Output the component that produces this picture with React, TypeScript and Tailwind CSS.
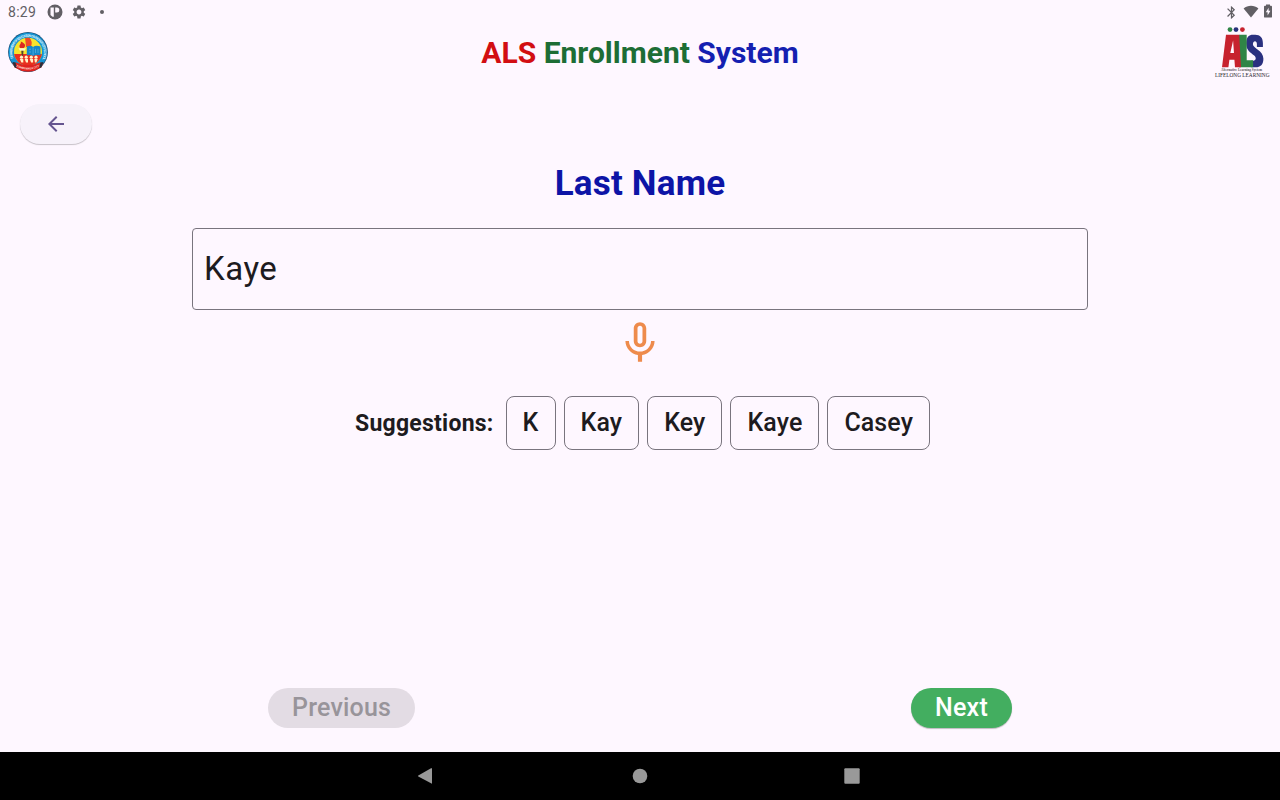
import React, { useState } from "react";
import { MdArrowBack, MdBluetooth, MdMicNone, MdSettings } from "react-icons/md";

const suggestions = ["K", "Kay", "Key", "Kaye", "Casey"];

function StatusBar() {
  return (
    <div className="flex h-6 shrink-0 items-center justify-between pl-2 pr-[7px] text-[#625f65]">
      <div className="flex items-center">
        <span className="w-[39px] text-[14px] leading-6 tracking-[0.3px]">8:29</span>
        <svg className="h-4 w-4" viewBox="0 0 16 16">
          <circle cx="8" cy="8" r="7.5" fill="currentColor" />
          <path d="M3.500 3.500h3.300v9.300H5.500l-2-1.900z" fill="#fef7ff" />
          <path d="M8.200 3.500h1.600a2.500 2.500 0 0 1 0 5H8.200z" fill="#fef7ff" />
        </svg>
        <MdSettings className="ml-2 h-4 w-4" />
        <span className="ml-[13px] h-1 w-1 rounded-full bg-[#625f65]" />
      </div>
      <div className="flex items-center">
        <MdBluetooth className="h-[15px] w-[15px]" />
        <svg className="ml-[4px] mb-px h-[13px] w-4" viewBox="0 0 16 13">
          <path d="M8 12.6 .6 3.4C4.700-.3 11.300-.3 15.400 3.400z" fill="currentColor" />
        </svg>
        <svg className="ml-[4px] mb-[2px] h-[14px] w-[10px]" viewBox="0 0 10 14">
          <path d="M3 .5h4v1.3h1.1q.9 0 .9.9v10q0 .9-.9.9H1.9q-.9 0-.9-.9v-10q0-.9.9-.9H3z" fill="currentColor" />
          <path d="M5.600 3.700 2.800 8.300h1.800v3.200l2.800-4.800H5.600z" fill="#fef7ff" />
        </svg>
      </div>
    </div>
  );
}

function DivisionSeal() {
  return (
    <svg className="h-10 w-10 overflow-visible" viewBox="0 0 40 40">
      <defs>
        <path id="seal-top" d="M5.500 27A15.800 15.800 0 1 1 34.500 27" />
        <path id="seal-bottom" d="M9 34.800Q20 40.200 31 34.800" />
        <clipPath id="seal-core">
          <circle cx="20" cy="19.800" r="14" />
        </clipPath>
      </defs>
      <circle cx="20" cy="20" r="19.900" fill="#1b4f76" />
      <circle cx="20" cy="20" r="19.200" fill="#1593d2" />
      <g clipPath="url(#seal-core)">
        <path d="M6 5h28v30H6z" fill="#f7e32c" />
        <path d="M17 5h4q4 4 2 10h-5z" fill="#ef4a26" />
        <path d="M6 22h28v13H6z" fill="#e9301f" />
        <path d="M18.800 14.500q4-1.500 6.300.5 2.500-2 7.400-.5v8.800q-5-1-7.400.7-2.300-1.700-6.300-.7z" fill="#1687c7" />
        <path d="M25.100 15.500v8M21 17.200h2M21 20h2M27.500 16.800v4.200M30 16.800v4.200" stroke="#69bde6" strokeWidth=".6" />
        <path d="M10.500 16.300h7.500l-1.500 2.500H12z" fill="#fbf6cc" />
        <path d="M13.300 18.800h2.200l-.4 5.200h-1.400z" fill="#55442c" />
        <path d="M12 16c-1.800-3.500 1.500-3.500.8-6.500 5 2.300 5.200 4.500 3 6.500z" fill="#dc2820" />
        <g fill="#fff3c8">
          <circle cx="13.500" cy="25.200" r="1.600" />
          <circle cx="18.200" cy="25.200" r="1.600" />
          <circle cx="23.300" cy="25.200" r="1.600" />
          <circle cx="28" cy="25.200" r="1.600" />
          <path d="M11.800 27h3.500v3.600h-2zM16.700 27h3.300v3.600h-2zM21.700 27h3.400v3.600h-2zM26.300 27h3.400l-1.300 3.600h-1.500z" />
        </g>
      </g>
      <path d="M4.500 31 8 30.500q12 5 24 0l3.500.5-2.200 4.500-1.500.7Q20 43.500 8.200 36.200l-1.500-.7z" fill="#df231f" />
      <path d="m4.500 30 3 .4 1.200 5.500-2-.4zM35.500 30l-3 .4-1.200 5.500 2-.4z" fill="#23333e" />
      <text fontSize="3.500" fontWeight="700" fill="#d4effb">
        <textPath href="#seal-top" startOffset="1" textLength="63">DEPARTMENT OF EDUCATION • DIVISION OF CITY SCHOOLS</textPath>
      </text>
      <text fontSize="2.800" fontWeight="700" fill="#ffd6cc">
        <textPath href="#seal-bottom" startOffset="50%" textAnchor="middle">ZAMBOANGA CITY</textPath>
      </text>
    </svg>
  );
}

function AlsLogo() {
  return (
    <svg className="h-[52px] w-[56px] overflow-visible" viewBox="0 0 56 52">
      <circle cx="16" cy="3.600" r="2.400" fill="#2f8546" />
      <circle cx="22" cy="3.600" r="2.400" fill="#27307a" />
      <circle cx="28.400" cy="3.600" r="2.400" fill="#c7222e" />
      <path d="M37.500 8.700h3.700c5 0 7.700 3 7.700 8.300v4h-6v-3c0-3.800-4-3.500-4 .2 0 4 10.500 6.200 10.500 14.500 0 5.600-2.800 8.600-7.800 8.600H37v-6.600c5 1 6-2.800 3.200-5.200-3.700-3.200-8-5.200-8-11.800 0-5.700 1.700-8 5.300-9z" fill="#2b3180" />
      <path d="M25 8.700h7.700v25.500h6.400v7.100H25z" fill="#2f8546" />
      <path d="M12 8.700h13.200l1.800 32.600h-6l-.6-7.600h-5l-1 7.600H8zM16.300 27h3.700l-.9-12.500z" fill="#c7222e" fillRule="evenodd" />
      <text x="7" y="45.300" fontFamily="Liberation Serif, serif" fontSize="4" fontWeight="700" fill="#5b5561" textLength="41" lengthAdjust="spacingAndGlyphs">Alternative Learning System</text>
      <text x="1" y="50.600" fontFamily="Liberation Serif, serif" fontSize="6" fill="#29262d" textLength="54.500" lengthAdjust="spacingAndGlyphs">LIFELONG LEARNING</text>
    </svg>
  );
}

function NavigationBar() {
  return (
    <nav className="flex h-12 shrink-0 items-center justify-center gap-[188px] bg-black text-[#999999]">
      <svg className="h-6 w-6" viewBox="0 0 24 24">
        <path d="M16 4.200v15.600L2.300 12.600q-.8-.6 0-1.200L15 4.300z" fill="currentColor" />
      </svg>
      <svg className="h-6 w-6" viewBox="0 0 24 24">
        <circle cx="12" cy="12" r="7.300" fill="currentColor" />
      </svg>
      <svg className="h-6 w-6" viewBox="0 0 24 24">
        <rect x="4.300" y="4.300" width="15.400" height="15.400" rx="1" fill="currentColor" />
      </svg>
    </nav>
  );
}

export default function App() {
  const [name, setName] = useState("Kaye");
  return (
    <div className="flex h-[800px] w-[1280px] flex-col overflow-hidden bg-[#fef7ff] font-[Roboto,sans-serif] text-[#1d1b20]">
      <StatusBar />
      <header className="flex h-14 shrink-0 items-center justify-between pl-2 pr-[10px]">
        <div className="flex w-[58px]"><DivisionSeal /></div>
        <h1 className="pt-0.5 text-[30px] leading-9 font-bold text-[#d20e12]">
          ALS <span className="text-[#1d6d35]">Enrollment</span> <span className="text-[#151fb1]">System</span>
        </h1>
        <AlsLogo />
      </header>
      <main className="flex flex-1 flex-col items-center pt-6">
        <button aria-label="Back" className="ml-5 flex h-10 w-[72px] shrink-0 items-center justify-center self-start rounded-full bg-[#f7f2fa] text-[#65558f] shadow-[0_1px_1px_rgba(0,0,0,0.22)]">
          <MdArrowBack className="h-6 w-6" />
        </button>
        <h2 className="mt-[19px] text-[35px] leading-[42px] font-bold tracking-[0.2px] text-[#0d14a6]">Last Name</h2>
        <input
          aria-label="Last Name"
          className="mt-[23px] h-[82px] w-[896px] shrink-0 rounded border border-[#79747e] bg-transparent px-[11px] pb-px text-[33px] tracking-[0.5px] outline-none"
          value={name}
          onChange={(e) => setName(e.target.value)}
        />
        <button aria-label="Speak" className="mt-2 text-[#ee8b4c]">
          <MdMicNone className="h-[50px] w-[50px]" />
        </button>
        <div className="mt-7 flex items-center gap-2 pl-[5px]">
          <span className="mr-1 h-[54px] text-[23px] leading-[56px] font-bold tracking-[0.25px]">Suggestions:</span>
          {suggestions.map((s) => (
            <button key={s} onClick={() => setName(s)} className="h-[54px] rounded-lg border border-[#79747e] px-4 text-[25px] font-medium tracking-[0.1px]">
              {s}
            </button>
          ))}
        </div>
        <div className="mt-auto mb-6 flex w-[744px] items-center justify-between">
          <button disabled className="h-10 rounded-full bg-[#e3dce4] px-6 text-[25px] leading-10 font-medium tracking-[0.2px] text-[#98949a]">Previous</button>
          <button className="h-10 rounded-full bg-[#43ae60] px-6 text-[25px] leading-10 font-medium tracking-[0.25px] text-white shadow-[0_1px_1px_rgba(0,0,0,0.25)]">Next</button>
        </div>
      </main>
      <NavigationBar />
    </div>
  );
}
